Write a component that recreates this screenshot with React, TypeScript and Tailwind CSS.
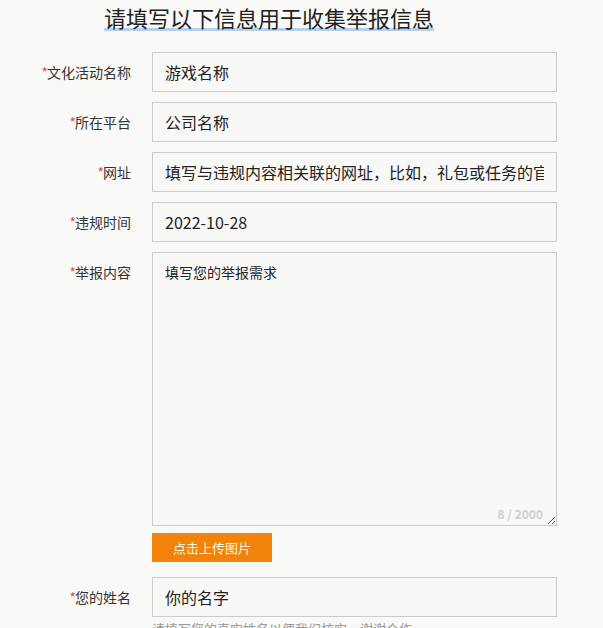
import React from "react";

const font = { fontFamily: '"Noto Sans CJK SC", "Noto Sans", sans-serif' };

function Label({ text }: { text: string }) {
  return (
    <div className="w-[131px] shrink-0 h-[40px] flex items-center justify-end text-[14px] text-[#333] mr-[21px]">
      <span className="text-[#e0504a] mr-[-1px]">*</span>
      {text}
    </div>
  );
}

function Field({ label, value }: { label: string; value: string }) {
  return (
    <div className="flex items-start">
      <Label text={label} />
      <input
        readOnly
        value={value}
        className="w-[405px] h-[40px] border border-[#cccccc] bg-[#f8f8f6] px-[12px] text-[16px] text-[#222] outline-none"
        style={font}
      />
    </div>
  );
}

export default function App() {
  return (
    <div className="min-h-[628px] w-full bg-[#f9f9f7] overflow-hidden" style={font}>
      <div className="pl-[104px] pt-[7px] h-[52px]">
        <span className="inline-block text-[22px] leading-[21px] border-b-[3px] border-[#b3d1ea] text-[#222]">
          请填写以下信息用于收集举报信息
        </span>
      </div>
      <div className="flex flex-col gap-[10px]">
        <Field label="文化活动名称" value="游戏名称" />
        <Field label="所在平台" value="公司名称" />
        <Field label="网址" value="填写与违规内容相关联的网址，比如，礼包或任务的官方网页链接" />
        <Field label="违规时间" value="2022-10-28" />
        <div className="flex items-start">
          <Label text="举报内容" />
          <div className="relative w-[405px]">
            <textarea
              readOnly
              value="填写您的举报需求"
              className="block w-[405px] h-[274px] border border-[#cccccc] bg-[#f8f8f6] px-[12px] pt-[9px] text-[14px] text-[#222] outline-none"
              style={font}
            />
            <span className="absolute right-[14px] bottom-[3px] text-[12px] font-bold text-[#cfcfcf]">8 / 2000</span>
          </div>
        </div>
      </div>
      <div className="pl-[152px] pt-[7px]">
        <button className="w-[120px] h-[29px] bg-[#f2830a] text-[13px] text-[#fff4dd]" style={font}>
          点击上传图片
        </button>
      </div>
      <div className="pt-[15px]">
        <Field label="您的姓名" value="你的名字" />
      </div>
      <div className="pl-[152px] pt-[2px] text-[13px] text-[#999]">
        请填写您的真实姓名以便我们核实，谢谢合作
      </div>
    </div>
  );
}
